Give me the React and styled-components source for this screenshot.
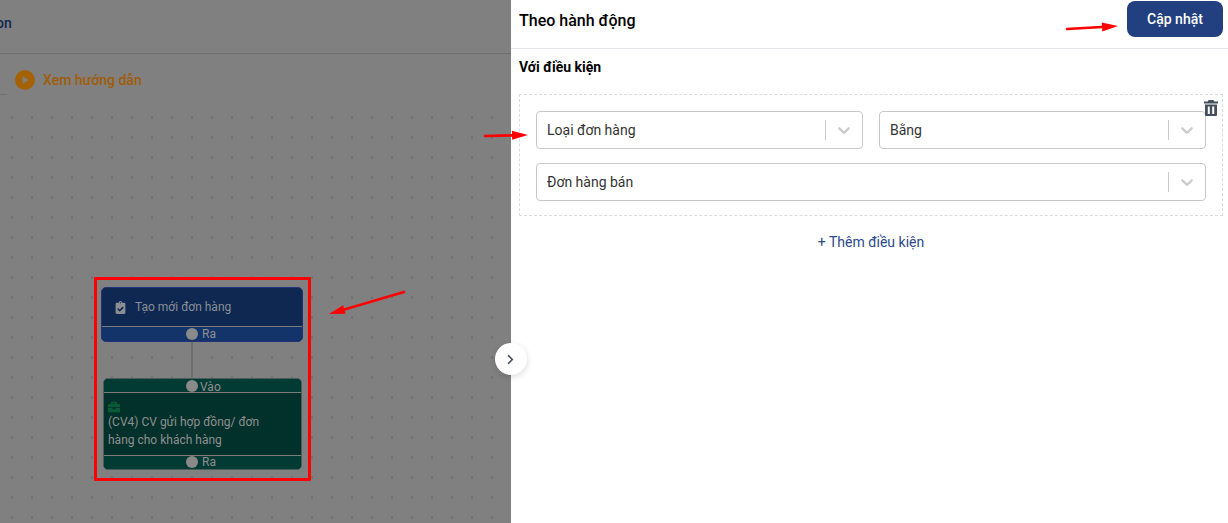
import React from "react";
import styled, { createGlobalStyle } from "styled-components";
import { FaClipboardCheck, FaBriefcase, FaChevronRight } from "react-icons/fa";

const Global = createGlobalStyle`
  html, body { margin: 0; padding: 0; height: 100%; overflow: hidden; }
  body { font-family: Roboto, "Liberation Sans", sans-serif; background: #fff; }
  #root { height: 100%; }
`;

const Page = styled.div`
  position: relative;
  display: flex;
  width: 1228px;
  height: 523px;
  overflow: hidden;
`;

/* left side, dimmed by the drawer backdrop */
const LeftPane = styled.div`
  width: 511px;
  flex: none;
  display: flex;
  flex-direction: column;
  background: #808080;
`;

const TopBar = styled.div`
  height: 54px;
  flex: none;
  box-sizing: border-box;
  border-bottom: 1px solid #707070;
  display: flex;
  align-items: center;
  padding-bottom: 7px;
  font-size: 14px;
  font-weight: 500;
  color: #11264f;
  overflow: hidden;
`;

const CutTitle = styled.span`
  margin-left: -4px;
`;

const GuideRow = styled.div`
  position: relative;
  height: 53px;
  flex: none;
  display: flex;
  align-items: center;
  gap: 8px;
  padding: 0 0 1px 15px;
  box-sizing: border-box;
  font-size: 14px;
  font-weight: 500;
  color: #a05c08;
`;

const PlayBadge = styled.span`
  width: 20px;
  height: 20px;
  border-radius: 50%;
  background: #a56205;
  display: flex;
  align-items: center;
  justify-content: center;
`;

const TabStub = styled.div`
  position: absolute;
  left: 0;
  top: 40px;
  width: 7px;
  height: 1px;
  background: #707070;
`;

const Canvas = styled.div`
  position: relative;
  flex: 1;
  background-image: radial-gradient(circle, #6e6e6e 1px, transparent 1.2px);
  background-size: 20px 20px;
  background-position: 2px 0.5px;
`;

const Node = styled.div`
  position: absolute;
  left: ${(p) => p.$left}px;
  top: ${(p) => p.$top}px;
  width: ${(p) => p.$width}px;
  box-sizing: border-box;
  border-radius: 5px;
  border: 1px solid ${(p) => p.$border};
  background: ${(p) => p.$bg};
  color: #8f8f8f;
  font-size: 12px;
  overflow: hidden;
`;

const Handle = styled.div`
  height: ${(p) => p.$h}px;
  background: ${(p) => p.$bg};
  border-${(p) => p.$side}: 1px solid #7c7c7c;
  box-sizing: ${(p) => (p.$side === "top" ? "border-box" : "content-box")};
  display: flex;
  align-items: center;
  padding-left: ${(p) => p.$pad}px;
  padding-bottom: ${(p) => (p.$side === "top" ? 1 : 0)}px;
  font-size: 12px;
  line-height: 12px;
  color: #8f8f8f;
`;

const HandleLabel = styled.span`
  margin-left: ${(p) => p.$gap || 4}px;
  margin-top: ${(p) => p.$drop || 0}px;
`;

const Dot = styled.span`
  width: 12px;
  height: 12px;
  border-radius: 50%;
  background: #8a8a8a;
  flex: none;
`;

const TriggerBody = styled.div`
  height: 38px;
  display: flex;
  align-items: center;
  gap: 8px;
  padding-left: 12px;
  color: #8a8f96;
`;

const ActionBody = styled.div`
  height: 62px;
  box-sizing: border-box;
  padding: 8px 4px 0;
  line-height: 18px;
  display: flex;
  flex-direction: column;
`;

const Connector = styled.div`
  position: absolute;
  left: 191px;
  top: 235px;
  width: 2px;
  height: 38px;
  background: #6f6f6f;
`;

const RedFrame = styled.div`
  position: absolute;
  left: 94px;
  top: 170px;
  width: 217px;
  height: 204px;
  box-sizing: border-box;
  border: 3px solid #f00;
  border-radius: 1px;
`;

/* right side drawer */
const Drawer = styled.div`
  flex: 1;
  background: #fff;
  display: flex;
  flex-direction: column;
`;

const DrawerHead = styled.div`
  height: 49px;
  flex: none;
  box-sizing: border-box;
  border-bottom: 1px solid #e3e5ea;
  display: flex;
  align-items: flex-start;
  justify-content: space-between;
  padding: 1px 5px 0 8px;
`;

const DrawerTitle = styled.div`
  font-size: 16px;
  font-weight: 500;
  line-height: 39px;
  color: #000;
`;

const SaveButton = styled.button`
  width: 96px;
  height: 36px;
  border: 0;
  border-radius: 8px;
  background: #223f80;
  color: #fff;
  font: 500 14px Roboto, sans-serif;
`;

const DrawerBody = styled.div`
  padding: 9px 5px 0 8px;
  display: flex;
  flex-direction: column;
`;

const SubTitle = styled.div`
  font-size: 14px;
  font-weight: 700;
  line-height: 18px;
  color: #000;
  margin-bottom: 18px;
`;

const ConditionBox = styled.div`
  position: relative;
  height: 122px;
  box-sizing: border-box;
  border: 1px dashed #dcdcdc;
  padding: 16px 16px 0;
  display: grid;
  grid-template-columns: 1fr 1fr;
  grid-template-rows: 38px 38px;
  gap: 14px 16px;
`;

const Delete = styled.svg`
  position: absolute;
  right: 4px;
  top: 5px;
  width: 14px;
  height: 16px;
  fill: #454e5c;
`;

const SelectBox = styled.div`
  grid-column: ${(p) => (p.$wide ? "1 / -1" : "auto")};
  box-sizing: border-box;
  border: 1px solid #c8c8c8;
  border-radius: 4px;
  display: flex;
  align-items: center;
  padding-left: 10px;
  font-size: 14px;
  color: #333;
`;

const SelectValue = styled.span`
  flex: 1;
`;

const SelectSep = styled.span`
  width: 1px;
  height: 20px;
  background: #ccc;
`;

const SelectArrow = styled.svg`
  width: 20px;
  height: 20px;
  margin: 0 8px;
  fill: #ccc;
`;

const AddLink = styled.div`
  text-align: center;
  margin-top: 17px;
  font-size: 14px;
  line-height: 18px;
  color: #2b4a8b;
`;

const ToggleButton = styled.div`
  position: absolute;
  left: 495px;
  top: 343px;
  width: 32px;
  height: 32px;
  border-radius: 50%;
  background: #fff;
  box-shadow: 0 2px 6px rgba(0, 0, 0, 0.15);
  display: flex;
  align-items: center;
  justify-content: center;
  padding-right: 2px;
  box-sizing: border-box;
  color: #4a5568;
`;

const Annotation = styled.svg`
  position: absolute;
  left: 0;
  top: 0;
  pointer-events: none;
`;

const Arrow = ({ x1, y1, x2, y2 }) => {
  const a = Math.atan2(y2 - y1, x2 - x1);
  const bx = x2 - 16 * Math.cos(a);
  const by = y2 - 16 * Math.sin(a);
  const nx = -Math.sin(a) * 4.5;
  const ny = Math.cos(a) * 4.5;
  return (
    <g fill="#f00" stroke="none">
      <line x1={x1} y1={y1} x2={bx} y2={by} stroke="#f00" strokeWidth="2.6" strokeLinecap="round" />
      <polygon points={`${x2},${y2} ${bx + nx},${by + ny} ${bx - nx},${by - ny}`} />
    </g>
  );
};

const Chevron = () => (
  <SelectArrow viewBox="0 0 20 20">
    <path d="M4.516 7.548c0.436-0.446 1.043-0.481 1.576 0l3.908 3.747 3.908-3.747c0.533-0.481 1.141-0.446 1.576 0 0.436 0.445 0.408 1.197 0 1.615-0.406 0.418-4.695 4.502-4.695 4.502-0.217 0.223-0.502 0.335-0.789 0.335s-0.572-0.112-0.791-0.335c0 0-4.287-4.084-4.695-4.502s-0.436-1.17 0-1.615z" />
  </SelectArrow>
);

const Select = ({ value, wide }) => (
  <SelectBox $wide={wide}>
    <SelectValue>{value}</SelectValue>
    <SelectSep />
    <Chevron />
  </SelectBox>
);

export default function App() {
  return (
    <Page>
      <Global />
      <LeftPane>
        <TopBar>
          <CutTitle>on</CutTitle>
        </TopBar>
        <GuideRow>
          <PlayBadge>
            <svg width="10" height="10" viewBox="0 0 10 10">
              <path d="M2.5 1.2 8.6 5 2.5 8.8z" fill="#808080" />
            </svg>
          </PlayBadge>
          Xem hướng dẫn
          <TabStub />
        </GuideRow>
        <Canvas>
          <Connector />
          <Node $left={101} $top={180} $width={202} $border="#24327c" $bg="#0e2852">
            <TriggerBody>
              <FaClipboardCheck size={13} color="#8a8f96" />
              Tạo mới đơn hàng
            </TriggerBody>
            <Handle $side="top" $bg="#12346a" $h={15} $pad={84}>
              <Dot />
              <HandleLabel>Ra</HandleLabel>
            </Handle>
          </Node>
          <Node $left={103} $top={271} $width={199} $border="#4a5f5b" $bg="#02312c">
            <Handle $side="bottom" $bg="#023a34" $h={13} $pad={82}>
              <Dot />
              <HandleLabel $gap={2} $drop={3}>Vào</HandleLabel>
            </Handle>
            <ActionBody>
              <FaBriefcase size={12} color="#0a5c36" />
              <span>(CV4) CV gửi hợp đồng/ đơn</span>
              <span>hàng cho khách hàng</span>
            </ActionBody>
            <Handle $side="top" $bg="#023a34" $h={14} $pad={82}>
              <Dot />
              <HandleLabel>Ra</HandleLabel>
            </Handle>
          </Node>
          <RedFrame />
        </Canvas>
      </LeftPane>
      <Drawer>
        <DrawerHead>
          <DrawerTitle>Theo hành động</DrawerTitle>
          <SaveButton>Cập nhật</SaveButton>
        </DrawerHead>
        <DrawerBody>
          <SubTitle>Với điều kiện</SubTitle>
          <ConditionBox>
            <Delete viewBox="0 0 14 16">
              <path d="M4.6 0h4.8l.8 1.5H14v2H0v-2h3.8z" />
              <path fillRule="evenodd" d="M1 4.5h12V15a1 1 0 0 1-1 1H2a1 1 0 0 1-1-1zM3.8 6.5v7.5h2V6.5zM8.2 6.5v7.5h2V6.5z" />
            </Delete>
            <Select value="Loại đơn hàng" />
            <Select value="Bằng" />
            <Select value="Đơn hàng bán" wide />
          </ConditionBox>
          <AddLink>+ Thêm điều kiện</AddLink>
        </DrawerBody>
      </Drawer>
      <ToggleButton>
        <FaChevronRight size={11} />
      </ToggleButton>
      <Annotation width="1228" height="523">
        <Arrow x1={404} y1={292} x2={329} y2={314} />
        <Arrow x1={485} y1={136} x2={528} y2={135} />
        <Arrow x1={1067} y1={29} x2={1118} y2={26} />
      </Annotation>
    </Page>
  );
}
